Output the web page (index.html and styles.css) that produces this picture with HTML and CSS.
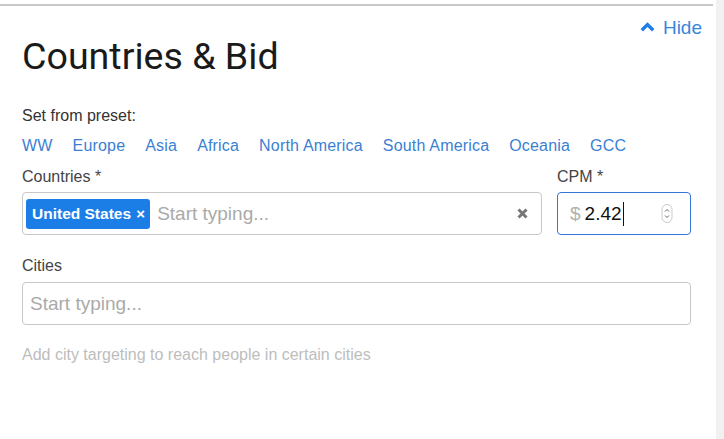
FILE: index.html
```html
<!DOCTYPE html>
<html lang="en">
<head>
<meta charset="utf-8">
<title>Countries &amp; Bid</title>
<link rel="stylesheet" href="styles.css">
</head>
<body>
<div class="page">
  <section class="panel">
    <header class="panel-head">
      <h1 class="title">Countries &amp; Bid</h1>
      <a class="hide-link" href="#">
        <svg class="chev" width="15" height="10" viewBox="0 0 15 10"><path d="M1.8 8.2 L7.5 2.6 L13.2 8.2" fill="none" stroke="#1f7de6" stroke-width="3.4" stroke-linecap="butt" stroke-linejoin="miter"/></svg>
        <span>Hide</span>
      </a>
    </header>

    <div class="preset-label">Set from preset:</div>
    <nav class="presets">
      <a href="#">WW</a>
      <a href="#">Europe</a>
      <a href="#">Asia</a>
      <a href="#">Africa</a>
      <a href="#">North America</a>
      <a href="#">South America</a>
      <a href="#">Oceania</a>
      <a href="#">GCC</a>
    </nav>

    <div class="row">
      <div class="field countries">
        <label class="label">Countries *</label>
        <div class="input tags-input">
          <span class="tag">United States <span class="tag-x">×</span></span>
          <span class="placeholder">Start typing...</span>
          <svg class="clear" width="11" height="11" viewBox="0 0 11 11"><path d="M1.5 1.5 L9.5 9.5 M9.5 1.5 L1.5 9.5" stroke="#777" stroke-width="3" stroke-linecap="butt"/></svg>
        </div>
      </div>
      <div class="field cpm">
        <label class="label">CPM *</label>
        <div class="input cpm-input">
          <span class="currency">$</span>
          <span class="value">2.42</span>
          <span class="caret"></span>
          <svg class="spin" width="12" height="19" viewBox="0 0 12 19"><rect x="1" y="0.5" width="10" height="18" rx="5" fill="#fff" stroke="#c9c9c9"/><path d="M4 7.5 L6 5.5 L8 7.5 M4 11.5 L6 13.5 L8 11.5" fill="none" stroke="#666" stroke-width="1"/></svg>
        </div>
      </div>
    </div>

    <div class="field cities">
      <label class="label">Cities</label>
      <div class="input">
        <span class="placeholder">Start typing...</span>
      </div>
    </div>
    <p class="help">Add city targeting to reach people in certain cities</p>
  </section>
  <div class="scrollbar"></div>
</div>
</body>
</html>
```

FILE: styles.css
```css
html, body {
  margin: 0;
  padding: 0;
  background: #fff;
}
body {
  font-family: "Liberation Sans", Arial, sans-serif;
  color: #333;
  width: 724px;
  height: 439px;
  overflow: hidden;
}
.page {
  display: flex;
  height: 439px;
}
.panel {
  flex: 1;
  margin-top: 4px;
  margin-right: 3px;
  border-top: 2px solid #c9c9c9;
  padding: 0 22px 0 22px;
}
.scrollbar {
  width: 8px;
  background: #f1f1f1;
}
.panel-head {
  display: flex;
  justify-content: space-between;
  align-items: flex-start;
}
.title {
  margin: 28px 0 0 0;
  font-family: Roboto, "Liberation Sans", sans-serif;
  font-weight: 400;
  font-size: 37.6px;
  line-height: 44px;
  color: #1a1a1a;
}
.hide-link {
  margin-top: 11px;
  margin-right: -11px;
  display: flex;
  align-items: center;
  gap: 8px;
  font-size: 19px;
  line-height: 22px;
  color: #3a86dc;
  text-decoration: none;
}
.chev {
  display: block;
  margin-top: -2px;
}
.preset-label {
  margin-top: 28px;
  font-size: 16px;
  line-height: 20px;
  color: #333;
}
.presets {
  margin-top: 10px;
  display: flex;
  gap: 20px;
  font-size: 16px;
  letter-spacing: 0.18px;
  line-height: 20px;
}
.presets a {
  color: #3b7fd3;
  text-decoration: none;
}
.row {
  margin-top: 11px;
  display: flex;
  gap: 15px;
}
.field {
  display: flex;
  flex-direction: column;
}
.countries {
  flex: 1;
}
.cpm {
  width: 134px;
}
.label {
  font-size: 16px;
  line-height: 20px;
  color: #444;
  margin-bottom: 5px;
}
.input {
  box-sizing: border-box;
  height: 43px;
  border: 1px solid #c8c8c8;
  border-radius: 4px;
  display: flex;
  align-items: center;
  padding: 0 7px;
  font-size: 19px;
}
.placeholder {
  color: #aaa;
}
.tags-input {
  padding-left: 3px;
  padding-right: 13px;
}
.tag {
  height: 30px;
  box-sizing: border-box;
  display: flex;
  align-items: center;
  background: #1b7ee7;
  color: #fff;
  font-weight: 700;
  font-size: 15.5px;
  border-radius: 3px;
  padding: 0 5px 0 6px;
  margin-right: 7px;
  white-space: pre;
}
.tag-x {
  font-size: 15px;
  margin-left: 1px;
}
.clear {
  margin-left: auto;
  display: block;
}
.cpm-input {
  border-color: #3476d2;
  padding-left: 12px;
  padding-right: 17px;
}
.currency {
  color: #b0b0b0;
  margin-right: 4px;
}
.value {
  color: #111;
}
.caret {
  width: 1px;
  height: 24px;
  background: #111;
  margin-left: 1px;
}
.spin {
  margin-left: auto;
  display: block;
}
.cities {
  margin-top: 21px;
}
.cities .label {
  margin-bottom: 6px;
}
.help {
  margin: 20px 0 0 0;
  font-size: 16px;
  line-height: 20px;
  color: #bdbdbd;
}
```
